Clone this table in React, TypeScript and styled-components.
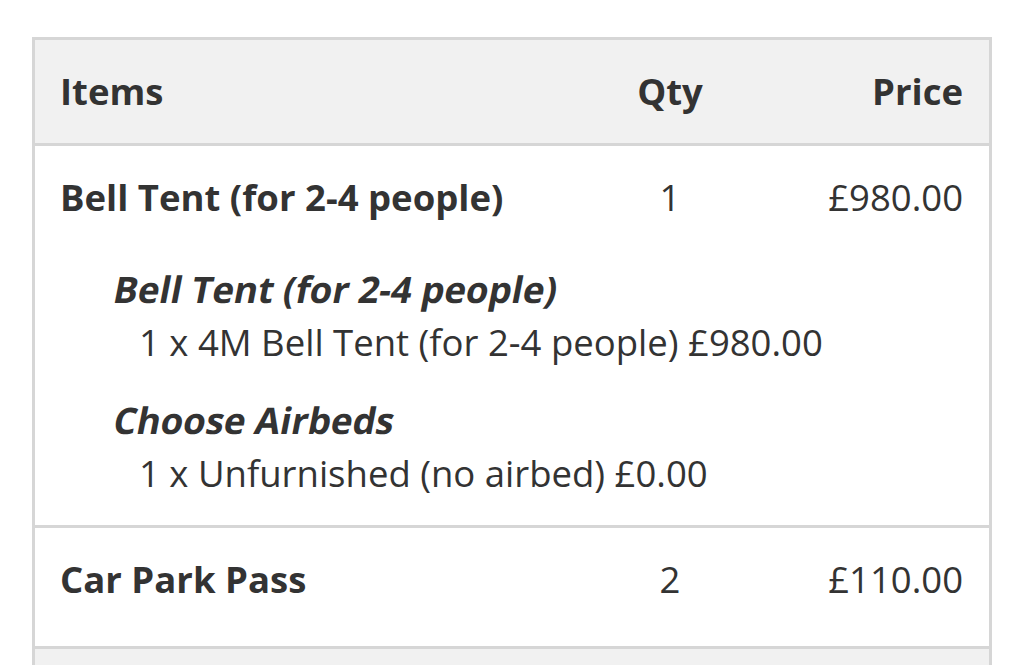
import React from "react";
import styled, { createGlobalStyle } from "styled-components";

const GlobalStyle = createGlobalStyle`
  body {
    margin: 0;
    background: #ffffff;
    font-family: "Open Sans", "Liberation Sans", sans-serif;
    color: #333333;
  }
`;

const Page = styled.div`
  padding: 37px 32px 0;
`;

const Table = styled.table`
  width: 100%;
  border-collapse: collapse;
  border: 3px solid #d6d6d6;
  font-size: 36.5px;
  line-height: 53px;
`;

const HeadRow = styled.tr`
  background: #f1f1f1;
  border-bottom: 3px solid #d6d6d6;
`;

const Th = styled.th<{ $align?: string; $width?: string }>`
  box-sizing: border-box;
  text-align: ${(p) => p.$align || "left"};
  width: ${(p) => p.$width || "auto"};
  font-weight: 700;
  padding: 25px 26px 25px 25px;
`;

const ItemRow = styled.tr<{ $last?: boolean }>`
  border-bottom: ${(p) => (p.$last ? "3px solid #d6d6d6" : "none")};
`;

const Td = styled.td<{ $align?: string; $bold?: boolean; $tail?: boolean }>`
  text-align: ${(p) => p.$align || "left"};
  font-weight: ${(p) => (p.$bold ? 700 : 400)};
  padding: 25px 26px ${(p) => (p.$tail ? "40px" : "25px")} 25px;
  vertical-align: top;
`;

const DetailCell = styled.td`
  padding: 14px 25px 25px 77px;
`;

const Option = styled.div`
  & + & {
    margin-top: 25px;
  }
`;

/* the source renders a faux-oblique bold, so slant the upright face */
const OptionName = styled.div`
  display: inline-block;
  font-weight: 700;
  transform: skewX(-11deg);
  transform-origin: 0 70%;
`;

const OptionValue = styled.div`
  padding-left: 27px;
`;

const FootRow = styled.tr`
  background: #f1f1f1;
`;

const FootCell = styled.td`
  height: 103px;
  padding: 0;
`;

type Item = {
  name: string;
  qty: number;
  price: string;
  options?: { name: string; value: string }[];
};

const items: Item[] = [
  {
    name: "Bell Tent (for 2-4 people)",
    qty: 1,
    price: "£980.00",
    options: [
      { name: "Bell Tent (for 2-4 people)", value: "1 x 4M Bell Tent (for 2-4 people) £980.00" },
      { name: "Choose Airbeds", value: "1 x Unfurnished (no airbed) £0.00" },
    ],
  },
  { name: "Car Park Pass", qty: 2, price: "£110.00" },
];

function App() {
  return (
    <Page>
      <GlobalStyle />
      <Table>
        <thead>
          <HeadRow>
            <Th>Items</Th>
            <Th $align="center" $width="140px">Qty</Th>
            <Th $align="right" $width="250px">Price</Th>
          </HeadRow>
        </thead>
        <tbody>
          {items.map((item) => {
            const tail = !item.options;
            return (
              <React.Fragment key={item.name}>
                <ItemRow $last={tail}>
                  <Td $bold $tail={tail}>{item.name}</Td>
                  <Td $align="center" $tail={tail}>{item.qty}</Td>
                  <Td $align="right" $tail={tail}>{item.price}</Td>
                </ItemRow>
                {item.options && (
                  <ItemRow $last>
                    <DetailCell colSpan={3}>
                      {item.options.map((o) => (
                        <Option key={o.name}>
                          <OptionName>{o.name}</OptionName>
                          <OptionValue>{o.value}</OptionValue>
                        </Option>
                      ))}
                    </DetailCell>
                  </ItemRow>
                )}
              </React.Fragment>
            );
          })}
        </tbody>
        <tfoot>
          <FootRow>
            <FootCell colSpan={3} />
          </FootRow>
        </tfoot>
      </Table>
    </Page>
  );
}

export default App;
